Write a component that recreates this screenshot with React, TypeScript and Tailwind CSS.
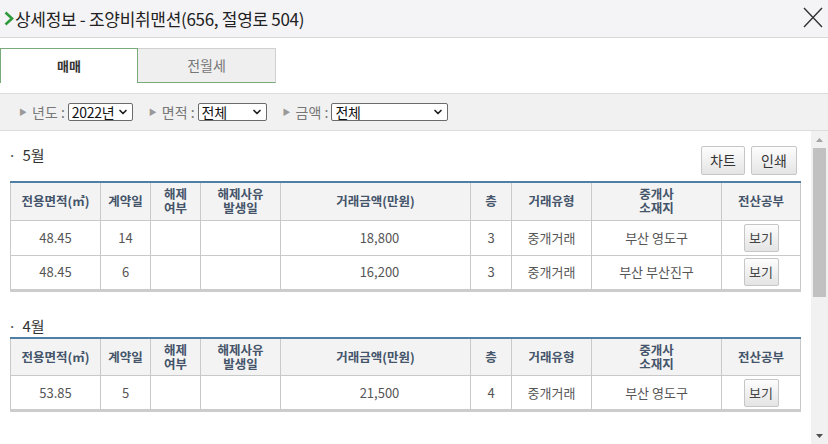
import { ChevronDown } from "lucide-react";

type Row = {
  area: string;
  day: string;
  amount: string;
  floor: string;
  kind: string;
  agent: string;
};

const MAY: Row[] = [
  { area: "48.45", day: "14", amount: "18,800", floor: "3", kind: "중개거래", agent: "부산 영도구" },
  { area: "48.45", day: "6", amount: "16,200", floor: "3", kind: "중개거래", agent: "부산 부산진구" },
];

const APRIL: Row[] = [
  { area: "53.85", day: "5", amount: "21,500", floor: "4", kind: "중개거래", agent: "부산 영도구" },
];

const COLS = [90, 50, 50, 80, 190, 41, 80, 130, 79];

function FakeSelect({ value, width }: { value: string; width: string }) {
  return (
    <div
      className={`flex h-[18px] items-center justify-between whitespace-nowrap rounded-[2px] border border-[#6b6b6b] bg-white pl-[3px] pr-[3px] text-[14px] leading-none text-[#111] ${width}`}
    >
      <span className="tracking-[-0.3px]">{value}</span>
      <ChevronDown size={12} strokeWidth={3.4} className="flex-none text-[#222]" />
    </div>
  );
}

function Filter({ label, children }: { label: string; children: React.ReactNode }) {
  return (
    <div className="flex items-center whitespace-nowrap text-[14px] text-[#777]">
      <span className="mr-[5px] text-[8px] text-[#999]">▶</span>
      <span className="mr-[3px]">{label} :</span>
      {children}
    </div>
  );
}

function GrayButton({ label, className }: { label: string; className: string }) {
  return (
    <button
      className={`flex items-center justify-center rounded-[2px] border border-[#c6c6c6] bg-gradient-to-b from-[#fdfdfd] to-[#e4e4e4] text-[#333] ${className}`}
    >
      {label}
    </button>
  );
}

function DealTable({ rows }: { rows: Row[] }) {
  const th = "border border-[#c9c9c9] px-0 text-[12.5px] font-bold leading-[14px] text-[#44546a]";
  const td = "border border-[#c9c9c9] text-center text-[#555]";
  return (
    <table className="ml-[10px] w-[790px] table-fixed border-collapse border-t-2 border-b-[3px] border-t-[#4f7fa7] border-b-[#cccccc] text-[13px]">
      <colgroup>
        {COLS.map((w, i) => (
          <col key={i} style={{ width: w }} />
        ))}
      </colgroup>
      <thead>
        <tr className="h-[38px] bg-[#f3f3f3] text-center">
          <th className={th}>전용면적(㎡)</th>
          <th className={th}>계약일</th>
          <th className={th}>
            해제
            <br />
            여부
          </th>
          <th className={th}>
            해제사유
            <br />
            발생일
          </th>
          <th className={th}>거래금액(만원)</th>
          <th className={th}>층</th>
          <th className={th}>거래유형</th>
          <th className={th}>
            중개사
            <br />
            소재지
          </th>
          <th className={th}>전산공부</th>
        </tr>
      </thead>
      <tbody>
        {rows.map((r, i) => (
          <tr key={i} className="h-[35px]">
            <td className={td}>{r.area}</td>
            <td className={td}>{r.day}</td>
            <td className={td}></td>
            <td className={td}></td>
            <td className={`${td} pl-[8px]`}>{r.amount}</td>
            <td className={td}>{r.floor}</td>
            <td className={td}>{r.kind}</td>
            <td className={td}>{r.agent}</td>
            <td className={td}>
              <div className="flex justify-center">
                <GrayButton label="보기" className="h-[28px] w-[35px] text-[13px] text-[#444]" />
              </div>
            </td>
          </tr>
        ))}
      </tbody>
    </table>
  );
}

export default function App() {
  return (
    <div
      className="flex h-[444px] w-[828px] flex-col overflow-hidden bg-white"
      style={{ fontFamily: '"Noto Sans CJK KR", "Noto Sans", sans-serif' }}
    >
      {/* title bar */}
      <div className="flex h-[38px] flex-none items-center justify-between border-b border-[#d8d8d8] bg-[#f4f4f6] pl-[4px] pr-[5px]">
        <div className="flex items-center text-[17px] tracking-[-0.3px] text-[#222]">
          <svg width="10" height="15" viewBox="0 0 10 15" className="mr-[1px]">
            <path d="M1.5 1.5 L8 7.5 L1.5 13.5" stroke="#2f9a3c" strokeWidth="2.6" fill="none" />
          </svg>
          상세정보 - 조양비취맨션(656, 절영로 504)
        </div>
        <svg width="20" height="21" viewBox="0 0 20 21" className="mb-[2px]">
          <path d="M1 1 L19 20 M19 1 L1 20" stroke="#333" strokeWidth="1.4" fill="none" />
        </svg>
      </div>

      {/* tabs */}
      <div className="mt-[10px] flex h-[35px] flex-none">
        <div className="flex w-[138px] items-center justify-center border-x border-t border-[#7aa97a] bg-white text-[13px] font-bold text-[#333]">
          매매
        </div>
        <div className="flex w-[138px] items-center justify-center border-t border-r border-b border-t-[#d0d0d0] border-r-[#d0d0d0] border-b-[#7aa97a] bg-[#efefef] text-[14px] text-[#777]">
          전월세
        </div>
      </div>

      {/* filter bar */}
      <div className="mt-[10px] flex h-[38px] flex-none items-center gap-[16px] border-y border-[#dcdcdc] bg-[#f1f1f1] pl-[19px]">
        <Filter label="년도">
          <FakeSelect value="2022년" width="w-[65px]" />
        </Filter>
        <Filter label="면적">
          <FakeSelect value="전체" width="w-[69px]" />
        </Filter>
        <Filter label="금액">
          <FakeSelect value="전체" width="w-[117px]" />
        </Filter>
      </div>

      {/* scroll area */}
      <div className="flex min-h-0 flex-1">
        <div className="flex-1 pt-[14px]">
          <div className="flex items-start justify-between pl-[8px] pr-[14px]">
            <div className="text-[15px] leading-[20px] text-[#333]">
              <span className="mr-[6px] text-[#555]">·</span>5월
            </div>
            <div className="mt-[1px] flex gap-[6px]">
              <GrayButton label="차트" className="h-[29px] w-[44px] text-[14px]" />
              <GrayButton label="인쇄" className="h-[29px] w-[46px] text-[14px]" />
            </div>
          </div>
          <div className="mt-[6px]">
            <DealTable rows={MAY} />
          </div>

          <div className="mt-[24px] pl-[8px] text-[15px] leading-[20px] text-[#333]">
            <span className="mr-[6px] text-[#555]">·</span>4월
          </div>
          <div className="mt-[1px]">
            <DealTable rows={APRIL} />
          </div>
        </div>

        {/* scrollbar */}
        <div className="flex w-[17px] flex-none flex-col bg-[#f1f1f1]">
          <div className="flex h-[17px] items-center justify-center">
            <svg width="7" height="4" viewBox="0 0 7 4">
              <path d="M0 4 L3.5 0 L7 4 Z" fill="#a3a3a3" />
            </svg>
          </div>
          <div className="mx-[2px] h-[149px] bg-[#c1c1c1]" />
          <div className="flex-1" />
          <div className="flex h-[17px] items-center justify-center">
            <svg width="7" height="4" viewBox="0 0 7 4">
              <path d="M0 0 L3.5 4 L7 0 Z" fill="#505050" />
            </svg>
          </div>
        </div>
      </div>
    </div>
  );
}
